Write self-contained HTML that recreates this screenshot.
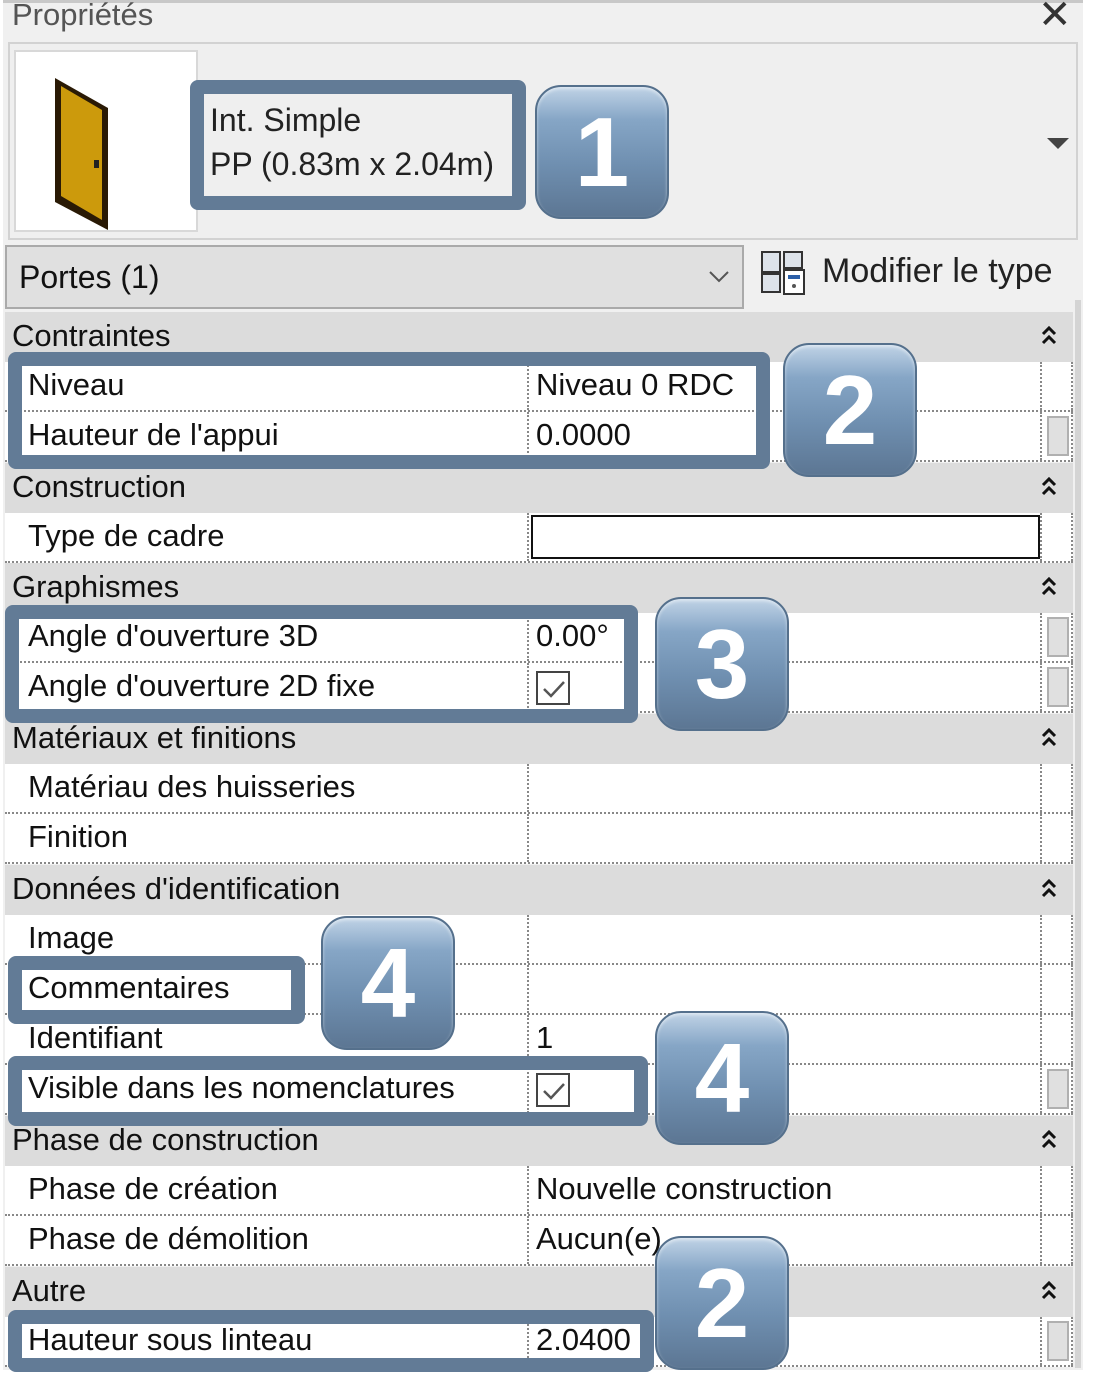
<!DOCTYPE html>
<html><head><meta charset="utf-8"><style>
*{margin:0;padding:0;box-sizing:border-box}
body{width:1098px;height:1388px;background:#fff;position:relative;overflow:hidden;font-family:"Liberation Sans",sans-serif;color:#111}
.a{position:absolute}
.panel{left:3px;top:0;width:1080px;height:1370px;background:#f0f0f0;border-top:3px solid #c8c8c8}
.hd{position:absolute;left:5px;width:1068px;height:50px;background:#dcdcdc;font-size:31px;line-height:48px;padding-left:7px}
.hd svg{position:absolute;left:1034px;top:12px}
.rw{position:absolute;left:5px;width:1068px;height:50px;background:#fff;border-bottom:2px dotted #888;font-size:31px;line-height:46px}
.rw .l{position:absolute;left:23px;top:0}
.rw .v{position:absolute;left:522px;top:0;height:48px;border-left:2px dotted #888;padding-left:7px;width:513px}
.rw .e{position:absolute;left:1035px;top:0;height:48px;width:33px;border-left:2px dotted #888;border-right:2px dotted #888}
.sq{position:absolute;left:5px;top:4px;width:22px;height:40px;background:#e0e0e0;border:2px solid #b0b0b0}
.cb{display:inline-block;width:34px;height:34px;border:2px solid #444;margin-top:8px;position:relative}
.box{position:absolute;border:14px solid #627b96;border-radius:8px}
.bd{position:absolute;width:134px;height:134px;border-radius:26px;border:2px solid #55708c;background:linear-gradient(#c0d3e6 0%,#86a6c6 25%,#6f8fb0 60%,#5c7693 100%);color:#fff;font-weight:bold;font-size:98px;text-align:center;line-height:130px;font-family:"Liberation Sans",sans-serif;box-shadow:inset 0 2px 3px rgba(255,255,255,.5)}
</style></head><body>
<div class="a panel"></div>
<div class="a" style="left:12px;top:-3px;font-size:31px;color:#555">Propriétés</div>
<div class="a" style="left:1038px;top:-8px;font-size:40px;color:#333">✕</div>
<div class="a" style="left:8px;top:42px;width:1070px;height:198px;border:2px solid #d2d2d2;background:#efefef"></div>
<div class="a" style="left:14px;top:50px;width:184px;height:182px;background:#fff;border:2px solid #d8d8d8"></div>
<svg class="a" style="left:50px;top:70px" width="70" height="165"><polygon points="5,8 58,38 58,160 5,132" fill="#2a1a05"/><polygon points="11,16 52,40 52,150 11,126" fill="#cc9a0c"/><rect x="44" y="90" width="5" height="8" fill="#222"/></svg>
<div class="a" style="left:210px;top:98px;font-size:32px;line-height:44px;color:#222">Int. Simple<br>PP (0.83m x 2.04m)</div>
<svg class="a" style="left:1047px;top:138px" width="22" height="12"><polygon points="0,0 22,0 11,11" fill="#444"/></svg>
<div class="a" style="left:5px;top:245px;width:739px;height:64px;background:#e0e0e0;border:2px solid #aaa;font-size:32px;line-height:60px;padding-left:12px">Portes (1)</div>
<svg class="a" style="left:708px;top:270px" width="22" height="14"><polyline points="2,2 11,11 20,2" fill="none" stroke="#555" stroke-width="2"/></svg>
<svg class="a" style="left:760px;top:250px" width="48" height="46"><rect x="2" y="2" width="18" height="20" fill="#dde3ea" stroke="#333" stroke-width="2"/><rect x="24" y="2" width="18" height="16" fill="#dde3ea" stroke="#333" stroke-width="2"/><rect x="2" y="24" width="18" height="18" fill="#dde3ea" stroke="#333" stroke-width="2"/><rect x="24" y="20" width="20" height="24" fill="#fff" stroke="#333" stroke-width="2"/><rect x="28" y="25" width="12" height="4" fill="#2b5fa8"/><circle cx="34" cy="36" r="2" fill="#555"/></svg>
<div class="a" style="left:822px;top:252px;font-size:34px;color:#222">Modifier le type</div>

<div class="hd" style="top:312px">Contraintes<svg width="20" height="22"><path d="M4 10 L10 4 L16 10 M4 19 L10 13 L16 19" fill="none" stroke="#111" stroke-width="3"/></svg></div>
<div class="rw" style="top:362px"><span class="l">Niveau</span><span class="v">Niveau 0 RDC</span><span class="e"></span></div>
<div class="rw" style="top:412px"><span class="l">Hauteur de l'appui</span><span class="v">0.0000</span><span class="e"><span class="sq"></span></span></div>
<div class="hd" style="top:463px">Construction<svg width="20" height="22"><path d="M4 10 L10 4 L16 10 M4 19 L10 13 L16 19" fill="none" stroke="#111" stroke-width="3"/></svg></div>
<div class="rw" style="top:513px"><span class="l">Type de cadre</span><span class="v" style="padding:0"><span style="position:absolute;left:2px;top:2px;width:509px;height:44px;border:2px solid #111"></span></span><span class="e"></span></div>
<div class="hd" style="top:563px">Graphismes<svg width="20" height="22"><path d="M4 10 L10 4 L16 10 M4 19 L10 13 L16 19" fill="none" stroke="#111" stroke-width="3"/></svg></div>
<div class="rw" style="top:613px"><span class="l">Angle d'ouverture 3D</span><span class="v">0.00°</span><span class="e"><span class="sq"></span></span></div>
<div class="rw" style="top:663px"><span class="l">Angle d'ouverture 2D fixe</span><span class="v"><span class="cb"><svg class="a" style="left:4px;top:6px" width="24" height="20"><polyline points="2,10 9,17 22,3" fill="none" stroke="#555" stroke-width="2.5"/></svg></span></span><span class="e"><span class="sq"></span></span></div>
<div class="hd" style="top:714px">Matériaux et finitions<svg width="20" height="22"><path d="M4 10 L10 4 L16 10 M4 19 L10 13 L16 19" fill="none" stroke="#111" stroke-width="3"/></svg></div>
<div class="rw" style="top:764px"><span class="l">Matériau des huisseries</span><span class="v"></span><span class="e"></span></div>
<div class="rw" style="top:814px"><span class="l">Finition</span><span class="v"></span><span class="e"></span></div>
<div class="hd" style="top:865px">Données d'identification<svg width="20" height="22"><path d="M4 10 L10 4 L16 10 M4 19 L10 13 L16 19" fill="none" stroke="#111" stroke-width="3"/></svg></div>
<div class="rw" style="top:915px"><span class="l">Image</span><span class="v"></span><span class="e"></span></div>
<div class="rw" style="top:965px"><span class="l">Commentaires</span><span class="v"></span><span class="e"></span></div>
<div class="rw" style="top:1015px"><span class="l">Identifiant</span><span class="v">1</span><span class="e"></span></div>
<div class="rw" style="top:1065px"><span class="l">Visible dans les nomenclatures</span><span class="v"><span class="cb"><svg class="a" style="left:4px;top:6px" width="24" height="20"><polyline points="2,10 9,17 22,3" fill="none" stroke="#555" stroke-width="2.5"/></svg></span></span><span class="e"><span class="sq"></span></span></div>
<div class="hd" style="top:1116px">Phase de construction<svg width="20" height="22"><path d="M4 10 L10 4 L16 10 M4 19 L10 13 L16 19" fill="none" stroke="#111" stroke-width="3"/></svg></div>
<div class="rw" style="top:1166px"><span class="l">Phase de création</span><span class="v">Nouvelle construction</span><span class="e"></span></div>
<div class="rw" style="top:1216px"><span class="l">Phase de démolition</span><span class="v">Aucun(e)</span><span class="e"></span></div>
<div class="hd" style="top:1267px">Autre<svg width="20" height="22"><path d="M4 10 L10 4 L16 10 M4 19 L10 13 L16 19" fill="none" stroke="#111" stroke-width="3"/></svg></div>
<div class="rw" style="top:1317px"><span class="l">Hauteur sous linteau</span><span class="v">2.0400</span><span class="e"><span class="sq"></span></span></div>
<div class="a" style="left:1075px;top:300px;width:6px;height:1068px;background:#d4d4d4"></div>

<div class="box" style="left:190px;top:80px;width:336px;height:130px"></div>
<div class="box" style="left:8px;top:352px;width:762px;height:117px"></div>
<div class="box" style="left:5px;top:605px;width:633px;height:118px"></div>
<div class="box" style="left:8px;top:956px;width:297px;height:68px"></div>
<div class="box" style="left:8px;top:1056px;width:640px;height:70px"></div>
<div class="box" style="left:8px;top:1310px;width:646px;height:62px"></div>

<div class="bd" style="left:535px;top:85px">1</div>
<div class="bd" style="left:783px;top:343px">2</div>
<div class="bd" style="left:655px;top:597px">3</div>
<div class="bd" style="left:321px;top:916px">4</div>
<div class="bd" style="left:655px;top:1011px">4</div>
<div class="bd" style="left:655px;top:1236px">2</div>
</body></html>
